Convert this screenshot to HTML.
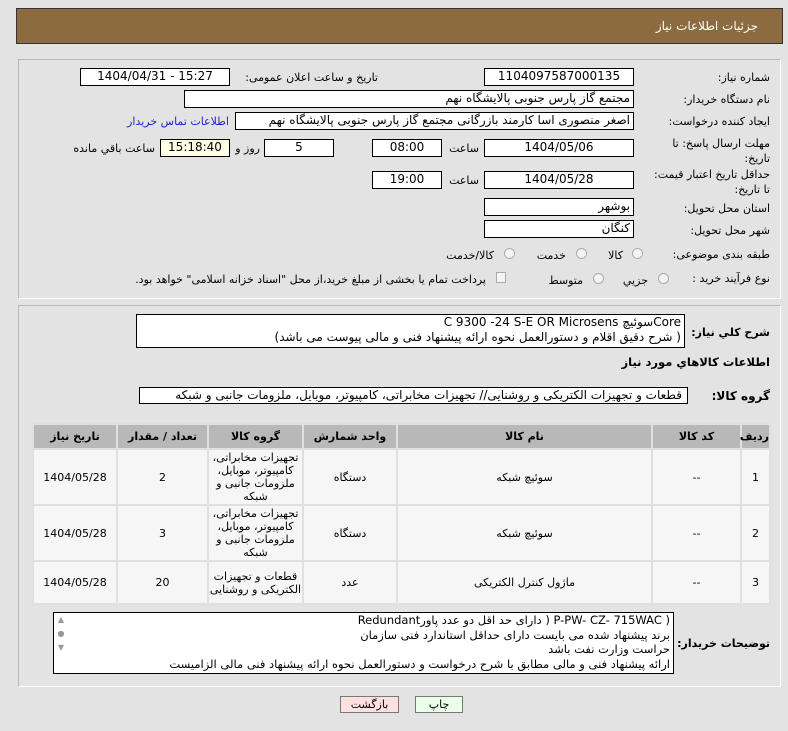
<!DOCTYPE html>
<html><head><meta charset="utf-8"><style>
*{margin:0;padding:0;box-sizing:border-box}
body{width:788px;height:731px;background:#e3e3e3;font-family:"DejaVu Sans","Liberation Sans",sans-serif;font-size:11px;color:#000;position:relative;overflow:hidden}
.a{position:absolute;white-space:nowrap}
.r{direction:rtl}
.box{position:absolute;background:#fff;border:1px solid #000;text-align:center;line-height:15px;font-size:12px}
.lbl{position:absolute;direction:rtl;text-align:right;white-space:nowrap}
.rad{position:absolute;width:11px;height:11px;border-radius:50%;border:1px solid #aaa;background:#f4f4f4}
table{position:absolute;left:32px;top:423px;width:739px;border-collapse:separate;border-spacing:2px;direction:rtl;background:#e0e0e0;table-layout:fixed}
th{background:#b8b8b8;height:23px;font-weight:bold;font-size:11px}
td{background:#f6f6f6;text-align:center;font-size:11px;line-height:13px}
</style></head><body>
<div class="a" style="left:16px;top:8px;width:767px;height:36px;background:#8b6b3f;border:1px solid #333"></div>
<div class="lbl" style="right:30px;top:19px;color:#fff;font-size:12px">جزئیات اطلاعات نیاز</div>

<div class="a" style="left:18px;top:59px;width:763px;height:240px;border:1px solid #b8b8b8;border-right-color:#fff;border-bottom-color:#fff"></div>

<div class="lbl" style="right:18px;top:71px">شماره نیاز:</div>
<div class="box" style="left:484px;top:68px;width:150px;height:18px">1104097587000135</div>
<div class="lbl" style="right:410px;top:71px">تاریخ و ساعت اعلان عمومی:</div>
<div class="box" style="left:80px;top:68px;width:150px;height:18px">1404/04/31 - 15:27</div>

<div class="lbl" style="right:18px;top:93px">نام دستگاه خریدار:</div>
<div class="box r" style="left:184px;top:90px;width:450px;height:18px;text-align:right;padding-right:3px">مجتمع گاز پارس جنوبی  پالایشگاه نهم</div>

<div class="lbl" style="right:18px;top:115px">ایجاد کننده درخواست:</div>
<div class="box r" style="left:235px;top:112px;width:399px;height:18px;text-align:right;padding-right:3px">اصغر منصوری اسا کارمند بازرگانی مجتمع گاز پارس جنوبی  پالایشگاه نهم</div>
<div class="lbl" style="right:559px;top:115px;color:#2222cc">اطلاعات تماس خریدار</div>

<div class="lbl" style="right:18px;top:137px">مهلت ارسال پاسخ: تا</div>
<div class="lbl" style="right:18px;top:152px">تاریخ:</div>
<div class="box" style="left:484px;top:139px;width:150px;height:18px">1404/05/06</div>
<div class="lbl" style="right:309px;top:142px">ساعت</div>
<div class="box" style="left:372px;top:139px;width:70px;height:18px">08:00</div>
<div class="box" style="left:264px;top:139px;width:70px;height:18px">5</div>
<div class="lbl" style="right:528px;top:142px">روز و</div>
<div class="box" style="left:160px;top:139px;width:70px;height:18px;background:#ffffe6">15:18:40</div>
<div class="lbl" style="right:633px;top:142px">ساعت باقي مانده</div>

<div class="lbl" style="right:18px;top:168px">حداقل تاریخ اعتبار قیمت:</div>
<div class="lbl" style="right:18px;top:183px">تا تاریخ:</div>
<div class="box" style="left:484px;top:171px;width:150px;height:18px">1404/05/28</div>
<div class="lbl" style="right:309px;top:174px">ساعت</div>
<div class="box" style="left:372px;top:171px;width:70px;height:18px">19:00</div>

<div class="lbl" style="right:18px;top:202px">استان محل تحویل:</div>
<div class="box r" style="left:484px;top:198px;width:150px;height:18px;text-align:right;padding-right:3px">بوشهر</div>
<div class="lbl" style="right:18px;top:224px">شهر محل تحویل:</div>
<div class="box r" style="left:484px;top:220px;width:150px;height:18px;text-align:right;padding-right:3px">کنگان</div>

<div class="lbl" style="right:18px;top:248px">طبقه بندی موضوعی:</div>
<div class="rad" style="left:632px;top:248px"></div><div class="lbl" style="right:165px;top:249px">کالا</div>
<div class="rad" style="left:576px;top:248px"></div><div class="lbl" style="right:222px;top:249px">خدمت</div>
<div class="rad" style="left:504px;top:248px"></div><div class="lbl" style="right:294px;top:249px">کالا/خدمت</div>

<div class="lbl" style="right:18px;top:272px">نوع فرآیند خرید :</div>
<div class="rad" style="left:658px;top:273px"></div><div class="lbl" style="right:140px;top:274px">جزیي</div>
<div class="rad" style="left:593px;top:273px"></div><div class="lbl" style="right:205px;top:274px">متوسط</div>
<div class="a" style="left:496px;top:272px;width:10px;height:11px;border:1px solid #aaa;background:#f4f4f4"></div>
<div class="lbl" style="right:302px;top:273px">پرداخت تمام یا بخشی از مبلغ خرید،از محل "اسناد خزانه اسلامی" خواهد بود.</div>

<div class="a" style="left:18px;top:305px;width:763px;height:382px;border:1px solid #b8b8b8;border-right-color:#fff;border-bottom-color:#fff"></div>
<div class="lbl" style="right:18px;top:326px;font-weight:bold;font-size:11px">شرح کلي نیاز:</div>
<div class="box r" style="left:136px;top:314px;width:549px;height:34px;text-align:right;padding-right:3px;line-height:15px">Coreسوئیچ C 9300 -24 S-E OR Microsens<br>( شرح دقیق اقلام و دستورالعمل نحوه ارائه پیشنهاد فنی و مالی پیوست می باشد)</div>
<div class="lbl" style="right:18px;top:355px;font-weight:bold;font-size:11.5px">اطلاعات کالاهاي مورد نیاز</div>
<div class="lbl" style="right:18px;top:389px;font-weight:bold;font-size:12px">گروه کالا:</div>
<div class="box r" style="left:139px;top:387px;width:549px;height:17px;text-align:right;padding-right:5px">قطعات و تجهیزات الکتریکی و روشنایی// تجهیزات مخابراتی، کامپیوتر، موبایل، ملزومات جانبی و شبکه</div>

<table>
<colgroup><col style="width:27px"><col style="width:87px"><col style="width:253px"><col style="width:92px"><col style="width:93px"><col style="width:89px"><col></colgroup>
<tr><th>ردیف</th><th>کد کالا</th><th>نام کالا</th><th>واحد شمارش</th><th>گروه کالا</th><th>تعداد / مقدار</th><th>تاریخ نیاز</th></tr>
<tr style="height:54px"><td>1</td><td>--</td><td>سوئیچ شبکه</td><td>دستگاه</td><td>تجهیزات مخابراتی، کامپیوتر، موبایل، ملزومات جانبی و شبکه</td><td>2</td><td>1404/05/28</td></tr>
<tr style="height:54px"><td>2</td><td>--</td><td>سوئیچ شبکه</td><td>دستگاه</td><td>تجهیزات مخابراتی، کامپیوتر، موبایل، ملزومات جانبی و شبکه</td><td>3</td><td>1404/05/28</td></tr>
<tr style="height:41px"><td>3</td><td>--</td><td>ماژول کنترل الکتریکی</td><td>عدد</td><td>قطعات و تجهیزات الکتریکی و روشنایی</td><td>20</td><td>1404/05/28</td></tr>
</table>

<div class="lbl" style="right:18px;top:637px;font-weight:bold;font-size:11px">توضیحات خریدار:</div>
<div class="box r" style="left:53px;top:612px;width:621px;height:62px;text-align:right;padding-right:3px;line-height:14.5px;font-size:11.5px;overflow:hidden">( P-PW- CZ- 715WAC ( دارای حد اقل دو عدد پاورRedundant<br>برند پیشنهاد شده می بایست دارای حداقل استاندارد فنی سازمان<br>حراست وزارت نفت باشد<br>ارائه پیشنهاد فنی و مالی مطابق با شرح درخواست و دستورالعمل نحوه ارائه پیشنهاد فنی مالی الزامیست</div>
<div class="a" style="left:54px;top:613px;width:14px;height:60px;background:#fff;color:#999;font-size:8px;line-height:14px;text-align:center">▲<br>●<br>▼</div>

<div class="a" style="left:340px;top:696px;width:59px;height:17px;background:#ffe0e0;border:1px solid #777;text-align:center;line-height:15px">بازگشت</div>
<div class="a" style="left:415px;top:696px;width:48px;height:17px;background:#eaffea;border:1px solid #777;text-align:center;line-height:15px">چاپ</div>
</body></html>
